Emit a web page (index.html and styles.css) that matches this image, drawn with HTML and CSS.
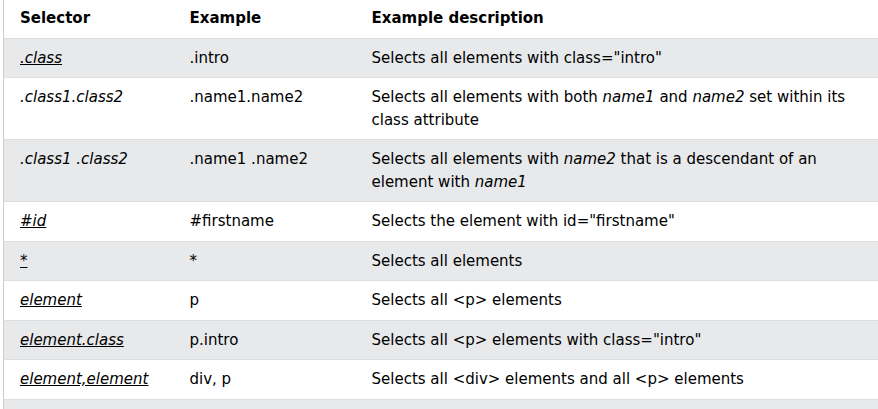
FILE: index.html
```html
<!DOCTYPE html>
<html>
<head>
<meta charset="utf-8">
<link rel="stylesheet" href="styles.css">
</head>
<body>
<table class="ref">
  <colgroup>
    <col class="c1">
    <col class="c2">
    <col class="c3">
  </colgroup>
  <tr class="head">
    <th>Selector</th>
    <th>Example</th>
    <th>Example description</th>
  </tr>
  <tr>
    <td><a class="sel" href="#"><i>.class</i></a></td>
    <td>.intro</td>
    <td>Selects all elements with class="intro"</td>
  </tr>
  <tr>
    <td><i>.class1.class2</i></td>
    <td>.name1.name2</td>
    <td>Selects all elements with both <i>name1</i> and <i>name2</i> set within its class attribute</td>
  </tr>
  <tr>
    <td><i>.class1 .class2</i></td>
    <td>.name1 .name2</td>
    <td>Selects all elements with <i>name2</i> that is a descendant of an element with <i>name1</i></td>
  </tr>
  <tr>
    <td><a class="sel" href="#"><i>#id</i></a></td>
    <td>#firstname</td>
    <td>Selects the element with id="firstname"</td>
  </tr>
  <tr>
    <td><a class="sel" href="#"><i>*</i></a></td>
    <td>*</td>
    <td>Selects all elements</td>
  </tr>
  <tr>
    <td><a class="sel" href="#"><i>element</i></a></td>
    <td>p</td>
    <td>Selects all &lt;p&gt; elements</td>
  </tr>
  <tr>
    <td><a class="sel" href="#"><i>element.class</i></a></td>
    <td>p.intro</td>
    <td>Selects all &lt;p&gt; elements with class="intro"</td>
  </tr>
  <tr>
    <td><a class="sel" href="#"><i>element,element</i></a></td>
    <td>div, p</td>
    <td>Selects all &lt;div&gt; elements and all &lt;p&gt; elements</td>
  </tr>
  <tr>
    <td><a class="sel" href="#"><i>element element</i></a></td>
    <td>div p</td>
    <td>Selects all &lt;p&gt; elements inside &lt;div&gt; elements</td>
  </tr>
</table>
</body>
</html>
```
FILE: styles.css
```css
html, body {
  margin: 0;
  padding: 0;
  background: #fff;
  overflow: hidden;
}
body {
  font-family: "DejaVu Sans", Verdana, sans-serif;
  font-size: 15px;
  line-height: 1.5;
  color: #000;
}
.ref {
  border-collapse: collapse;
  border-spacing: 0;
  table-layout: fixed;
  width: 876px;
  margin: -2px 0 0 3px;
  border: 1px solid #ccc;
}
.c1 { width: 178px; }
.c2 { width: 182px; }
.ref tr {
  border-bottom: 1px solid #ddd;
}
.ref tr:nth-child(even) {
  background: #e7e9eb;
}
.ref th, .ref td {
  padding: 8px;
  text-align: left;
  vertical-align: top;
}
.ref th {
  font-weight: bold;
}
.ref th:first-child, .ref td:first-child {
  padding-left: 16px;
}
.sel {
  color: #000;
  text-decoration: underline;
}
```
